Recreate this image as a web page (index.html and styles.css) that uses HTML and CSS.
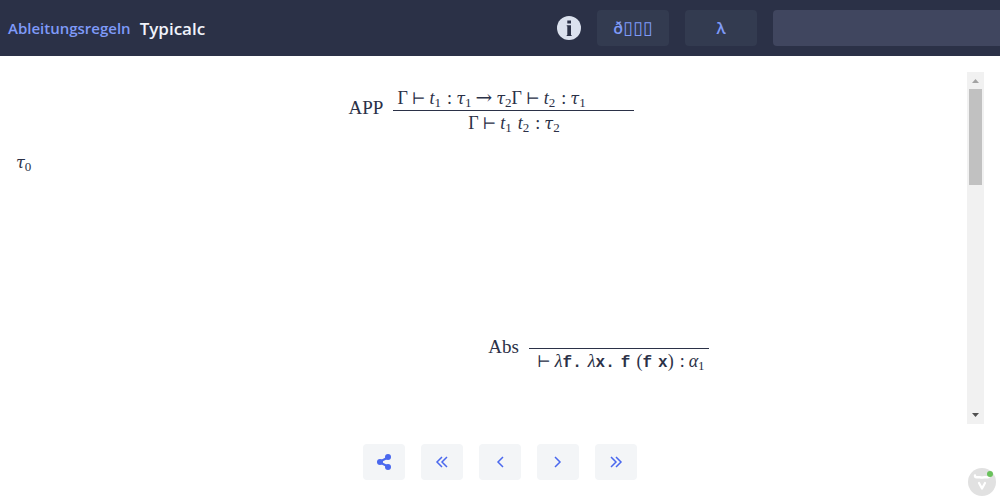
FILE: index.html
```html
<!DOCTYPE html>
<html lang="de">
<head>
<meta charset="utf-8">
<title>Typicalc</title>
<link rel="stylesheet" href="styles.css">
</head>
<body>
<header class="bar">
  <a class="rules" href="#">Ableitungsregeln</a>
  <h1 class="brand">Typicalc</h1>
  <button class="info" type="button" aria-label="Info">
    <svg viewBox="0 0 24 24" width="24" height="24"><circle cx="12" cy="12" r="12" fill="#dbe1ee"/><path d="M10.300 4.500h3.700v3h-3.700zM9.700 9.200H14v9.800h.6v1H9.700v-1h.6v-8.800h-.6z" fill="#2b3147"/></svg>
  </button>
  <button class="tool" type="button">ð<span class="boxes">▯▯▯</span></button>
  <button class="tool" type="button">λ</button>
  <input class="term" type="text" aria-label="Term">
</header>
<main class="page">
  <section class="viewer">
    <div class="canvas">
      <div class="proof">
        <span class="label">APP</span>
        <div class="frac app">
          <div class="row top"><span>Γ</span><span class="rel">⊢</span><i>t</i><sub>1</sub><span class="colon">:</span><i class="tau">τ</i><sub>1</sub><span class="arrow">→</span><i class="tau">τ</i><sub>2</sub><span>Γ</span><span class="rel">⊢</span><i>t</i><sub>2</sub><span class="colon">:</span><i class="tau">τ</i><sub>1</sub></div>
          <div class="row low"><span>Γ</span><span class="rel">⊢</span><i>t</i><sub>1</sub><i class="arg">t</i><sub>2</sub><span class="colon">:</span><i class="tau">τ</i><sub>2</sub></div>
        </div>
      </div>
      <div class="row type"><i class="tau">τ</i><sub>0</sub></div>
      <div class="proof tree">
        <span class="label">Abs</span>
        <div class="frac abs">
          <div class="row low"><span class="rel">⊢</span><i>λ</i><code>f.</code><i class="arg">λ</i><code>x.</code><code class="arg">f</code><span class="arg">(</span><code>f</code><code class="arg">x</code><span>)</span><span class="colon">:</span><i class="alpha">α</i><sub>1</sub></div>
        </div>
      </div>
    </div>
    <div class="scroll" aria-hidden="true">
      <svg viewBox="0 0 17 17" width="17" height="17"><path d="M5 11h7L8.500 7z" fill="#a3a3a3"/></svg>
      <div class="thumb"></div>
      <svg viewBox="0 0 17 17" width="17" height="17"><path d="M5 6h7L8.500 10z" fill="#505050"/></svg>
    </div>
  </section>
  <nav class="controls">
    <button type="button" aria-label="Teilen"><svg viewBox="0 0 16 16" width="16" height="16"><path d="M13 3 3 8l10 5" stroke-width="2"/><g fill="#4a68ee" stroke="none"><circle cx="12" cy="3" r="3"/><circle cx="4" cy="8" r="3"/><circle cx="12" cy="13" r="3"/></g></svg></button>
    <button type="button" aria-label="Anfang"><svg viewBox="0 0 16 16" width="16" height="16"><path d="M8 3 3 8l5 5M13 3 8 8l5 5"/></svg></button>
    <button type="button" aria-label="Zurück"><svg viewBox="0 0 16 16" width="16" height="16"><path d="M11 3 6 8l5 5"/></svg></button>
    <button type="button" aria-label="Weiter"><svg viewBox="0 0 16 16" width="16" height="16"><path d="m5 3 5 5-5 5"/></svg></button>
    <button type="button" aria-label="Ende"><svg viewBox="0 0 16 16" width="16" height="16"><path d="m3 3 5 5-5 5M8 3l5 5-5 5"/></svg></button>
  </nav>
</main>
<button class="badge" type="button" aria-label="Vaadin"><svg viewBox="0 0 28 28" width="28" height="28"><circle cx="14" cy="14" r="14" fill="#e1e1e1"/><path d="M7 7.500v.5q0 1.200 1.500 1.200H12q1.800 0 2 1.300.2-1.300 2-1.300h3.500q1.500 0 1.500-1.200" fill="none" stroke="#fff" stroke-width="2.400" stroke-linecap="round"/><path d="M11 15 14 20.500l3-5.500" fill="none" stroke="#fff" stroke-width="2.200" stroke-linecap="round" stroke-linejoin="round"/><circle cx="22" cy="6" r="3" fill="#69c15b"/></svg></button>
</body>
</html>
```
FILE: styles.css
```css
* { box-sizing: border-box; }
body {
  margin: 0;
  min-height: 100vh;
  display: flex;
  flex-direction: column;
  overflow: hidden;
  background: #fff;
  color: #2b3147;
  font-family: "Open Sans", "Noto Sans", sans-serif;
  font-size: 16px;
}
button { border: 0; padding: 0; font: inherit; }
.bar {
  display: flex;
  align-items: center;
  height: 56px;
  padding-left: 8px;
  background: #2b3147;
}
.rules { color: #7f9af8; font-size: 15px; font-weight: 600; text-decoration: none; }
.brand { margin: 0 auto 0 9px; color: #f0f3fb; font-size: 17px; font-weight: 600; }
.info { width: 24px; height: 24px; margin-right: 16px; background: none; }
.info svg { display: block; }
.tool {
  display: flex;
  align-items: center;
  justify-content: center;
  width: 72px;
  height: 36px;
  margin-right: 16px;
  border-radius: 4px;
  background: #333b50;
  color: #7f9af8;
  font-weight: 600;
}
.boxes { font-family: "DejaVu Sans", sans-serif; font-size: 18px; font-weight: 400; line-height: 20px; }
.term {
  width: 227px;
  height: 36px;
  padding: 0 8px;
  border: 0;
  border-radius: 4px 0 0 4px;
  background: #40465f;
  color: #fff;
}
.page { flex: 1; display: flex; flex-direction: column; padding: 16px 16px 20px; }
.viewer { flex: 1; display: flex; overflow: hidden; }
.canvas {
  flex: 1;
  padding-top: 14px;
  font-family: "Liberation Serif", serif;
  font-size: 18px;
}
.proof { display: flex; align-items: center; justify-content: center; gap: 10px; }
.label { font-size: 19px; line-height: 24px; padding-bottom: 6px; }
.row { display: flex; align-items: baseline; line-height: 24px; }
.row sub { font-size: 13px; line-height: 12px; position: relative; top: 3px; vertical-align: baseline; }
.row code { font-family: "Liberation Mono", monospace; font-size: 16px; font-weight: 700; }
.rel { font-family: "DejaVu Serif", serif; font-size: 16px; line-height: 22px; margin: 0 4px; }
.colon { margin: 0 4px 0 6px; }
.arrow { font-family: "DejaVu Serif", serif; font-size: 20px; line-height: 22px; margin: 0 4px; }
.tau { font-family: "DejaVu Serif", serif; font-size: 16px; line-height: 22px; }
.arg { margin-left: 6px; }
.frac { display: flex; flex-direction: column; }
.app { width: 241px; }
.top { padding-left: 4px; }
.low { justify-content: center; border-top: 1px solid #2b3147; }
.type { margin-top: 17px; }
.tree { margin-top: 150px; padding-left: 214px; }
.abs { width: 180px; padding-top: 24px; }
.scroll { width: 17px; display: flex; flex-direction: column; background: #f1f1f1; }
.thumb { height: 96px; margin: 0 2px auto; background: #c1c1c1; }
.controls { display: flex; justify-content: center; gap: 16px; margin-top: 20px; }
.controls button {
  display: flex;
  align-items: center;
  justify-content: center;
  width: 42px;
  height: 36px;
  border-radius: 4px;
  background: #f3f5f7;
}
.controls svg { fill: none; stroke: #4a68ee; stroke-width: 1.5; }
.badge { position: fixed; right: 4px; bottom: 4px; width: 28px; height: 28px; background: none; }
.badge svg { display: block; }
```
